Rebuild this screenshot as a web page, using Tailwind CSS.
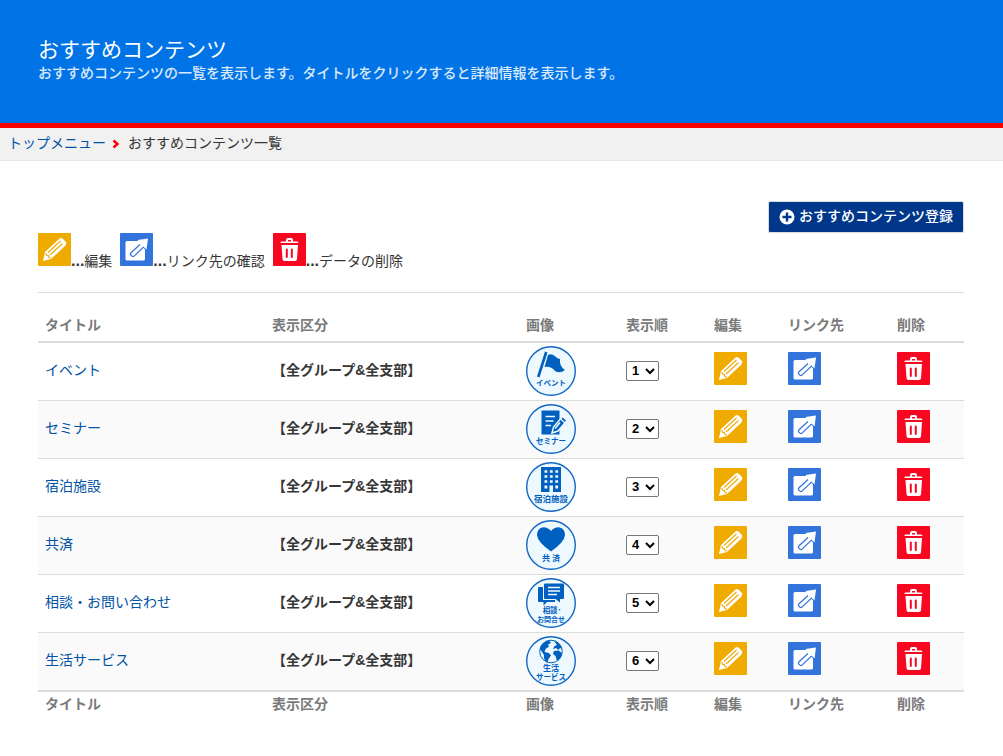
<!DOCTYPE html>
<html lang="ja">
<head>
<meta charset="utf-8">
<meta name="viewport" content="width=device-width, initial-scale=1">
<title>おすすめコンテンツ</title>
<script src="https://cdn.jsdelivr.net/npm/@tailwindcss/browser@4"></script>
</head>
<body class="bg-white font-['Liberation_Sans','Noto_Sans_CJK_JP',sans-serif] text-sm leading-[21px] text-[#363636]">

<svg class="hidden" aria-hidden="true">
  <symbol id="edit" viewBox="0 0 33 33">
    <rect width="33" height="33" rx="1" fill="#f0ab00"/>
    <path d="M5 28 7 19 21 6Q23 4 25 6L28 9Q29 11 27 13L13 26Z" fill="#fff"/>
    <path d="M10 19.500 22.500 8M12 22 24.500 10.500M8 20Q8 23 10.500 22.500Q10 25 13 25" fill="none" stroke="#f0ab00" stroke-width="1.100"/>
    <path d="M6.500 23.500 9.500 26 5.500 27.500Z" fill="#fff"/>
  </symbol>
  <symbol id="link" viewBox="0 0 33 33">
    <rect width="33" height="33" rx="1" fill="#3273dc"/>
    <path d="M7 8H20L25 13V26Q25 27.500 23.500 27.500H7Q5.500 27.500 5.500 26V9.500Q5.500 8 7 8Z" fill="#fff"/>
    <path d="M20 11.500 10.800 20Q9.800 21 10.800 22L12 23.200Q13 24.200 14 23.200L23.500 14L26.500 17" fill="#fff" stroke="#3273dc" stroke-width="1.200"/>
    <path d="M17.500 7 28 5.500 26.500 16.500 23.500 13.500 20 11Z" fill="#fff"/>
  </symbol>
  <symbol id="trash" viewBox="0 0 33 33">
    <rect width="33" height="33" rx="1" fill="#f80820"/>
    <path d="M7.500 10V9.500Q7.500 8.500 8.500 8.500H13V7Q13 5 15 5H18Q20 5 20 7V8.500H24Q25.500 8.500 25.500 10ZM15 8.500H18V7H15ZM8.500 12H25L24 26Q24 28 22 28H11.500Q9.500 28 9.500 26Z" fill="#fff" fill-rule="evenodd"/>
    <path d="M13.800 16.500V24M18.800 16.500V24" stroke="#f80820" stroke-width="2" stroke-linecap="round"/>
  </symbol>
  <symbol id="ring" viewBox="0 0 50 50">
    <circle cx="25" cy="25" r="24.300" fill="#eef9ff" stroke="#1268c3" stroke-width="1.400"/>
  </symbol>
</svg>

<header class="border-b-5 border-[#f00] bg-[#0073e6] px-[38px] pt-[37px] pb-[39px]">
  <h1 class="text-[21px] leading-[26px] text-white">おすすめコンテンツ</h1>
  <p class="font-medium text-white/85">おすすめコンテンツの一覧を表示します。タイトルをクリックすると詳細情報を表示します。</p>
</header>

<nav aria-label="パンくず" class="flex items-center gap-1.5 border-b border-[#e6e6e6] bg-[#f1f1f1] px-2 pt-[5px] pb-1.5">
  <a href="#" class="text-[#0052a5]">トップメニュー</a>
  <svg viewBox="0 0 8 10" class="mr-0.5 h-2.5 w-2" fill="none" stroke="#f00" stroke-width="2.400" aria-hidden="true"><path d="M1.500 1.500 5.500 5 1.500 8.500"/></svg>
  <span>おすすめコンテンツ一覧</span>
</nav>

<main class="pt-10 pr-[39px] pl-[38px]">
  <div class="flex justify-end">
    <button type="button" class="flex h-[32px] items-center gap-1 rounded-xs border border-[#dbdbdb] bg-[#00378b] px-2.5 pb-0.5 font-bold text-white">
      <svg viewBox="0 0 16 16" class="mt-0.5 h-4 w-4" aria-hidden="true"><circle cx="8" cy="8" r="7.500" fill="#fff"/><path d="M8 3.500V12.500M3.500 8H12.500" stroke="#00378b" stroke-width="2.400"/></svg>
      <span class="font-medium">おすすめコンテンツ登録</span>
    </button>
  </div>

  <div class="flex gap-2">
    <div class="flex"><svg class="h-[33px] w-[33px]" aria-hidden="true"><use href="#edit"/></svg><span class="pt-[17px]"><b class="text-base leading-[21px]">...</b>編集</span></div>
    <div class="flex"><svg class="h-[33px] w-[33px]" aria-hidden="true"><use href="#link"/></svg><span class="pt-[17px]"><b class="text-base leading-[21px]">...</b>リンク先の確認</span></div>
    <div class="flex"><svg class="h-[33px] w-[33px]" aria-hidden="true"><use href="#trash"/></svg><span class="pt-[17px]"><b class="text-base leading-[21px]">...</b>データの削除</span></div>
  </div>

  <hr class="mt-5 border-[#dbdbdb]">

  <table class="mt-[22px] w-full table-fixed border-separate border-spacing-0 text-left [&_td]:px-[7px] [&_td]:pt-0 [&_td]:pb-0.5 [&_th]:px-[7px] [&_thead_th]:border-b-2 [&_thead_th]:border-[#dbdbdb] [&_thead_th]:pb-[5px] [&_tfoot_th]:border-t-2 [&_tfoot_th]:border-[#dbdbdb] [&_tfoot_th]:pt-0.5 [&_tbody_tr]:h-[58px] [&_tbody_tr:last-child]:h-[57px] [&_tbody_tr:last-child_td]:border-b-0 [&_tbody_td]:border-b [&_tbody_td]:border-[#dbdbdb] [&_tbody_tr:nth-child(even)]:bg-[#fafafa]">
    <colgroup>
      <col class="w-[227px]"><col class="w-[254px]"><col class="w-[100px]"><col class="w-[88px]"><col class="w-[74px]"><col class="w-[109px]"><col class="w-[74px]">
    </colgroup>
    <thead class="text-[#7a7a7a]">
      <tr><th scope="col">タイトル</th><th scope="col">表示区分</th><th scope="col">画像</th><th scope="col">表示順</th><th scope="col">編集</th><th scope="col">リンク先</th><th scope="col">削除</th></tr>
    </thead>
    <tbody>
      <tr>
        <td><a href="#" class="text-[#0052a5]">イベント</a></td>
        <td class="font-bold">【全グループ&amp;全支部】</td>
        <td><svg viewBox="0 0 50 50" class="h-[50px] w-[50px]" fill="#0060c0" role="img" aria-label="イベント"><use href="#ring"/>
          <path d="M19 5.500 21.500 6.500 13.500 31.500 11 30.500Z"/><path d="M22 9Q26 7 30 11Q32 13 34 13Q33 20 39 24Q34 28 29 25Q25 20 18.500 21Z"/>
          <text x="25" y="39.500" text-anchor="middle" font-size="7.500" font-weight="bold">イベント</text></svg></td>
        <td><select aria-label="イベントの表示順" class="h-5 w-[33px] rounded-xs border border-[#767676] bg-white pl-px text-[13px] font-bold text-black"><option>1</option></select></td>
        <td><button type="button" aria-label="編集" class="block pb-1"><svg class="h-[33px] w-[33px]"><use href="#edit"/></svg></button></td>
        <td><a href="#" aria-label="リンク先" class="block pb-1"><svg class="h-[33px] w-[33px]"><use href="#link"/></svg></a></td>
        <td><button type="button" aria-label="削除" class="block pb-1"><svg class="h-[33px] w-[33px]"><use href="#trash"/></svg></button></td>
      </tr>
      <tr>
        <td><a href="#" class="text-[#0052a5]">セミナー</a></td>
        <td class="font-bold">【全グループ&amp;全支部】</td>
        <td><svg viewBox="0 0 50 50" class="h-[50px] w-[50px]" fill="#0060c0" role="img" aria-label="セミナー"><use href="#ring"/>
          <path d="M15.500 6.500H33.500V30.500H15.500Z"/><path d="M19.500 12.500H29M19.500 17H27.500M19.500 21.500H25" stroke="#eef9ff" stroke-width="1.600"/>
          <path d="M26 29 27.500 23 36.500 12.500 41 16.500 32 27Z" stroke="#eef9ff" stroke-width="1.500"/><path d="M34 14.500 39 19" stroke="#eef9ff" stroke-width="1.200"/><path d="M29 24.500 34 18.500" stroke="#eef9ff" stroke-width="1.500"/>
          <text x="25" y="39.500" text-anchor="middle" font-size="7.500" font-weight="bold">セミナー</text></svg></td>
        <td><select aria-label="セミナーの表示順" class="h-5 w-[33px] rounded-xs border border-[#767676] bg-white pl-px text-[13px] font-bold text-black"><option>2</option></select></td>
        <td><button type="button" aria-label="編集" class="block pb-1"><svg class="h-[33px] w-[33px]"><use href="#edit"/></svg></button></td>
        <td><a href="#" aria-label="リンク先" class="block pb-1"><svg class="h-[33px] w-[33px]"><use href="#link"/></svg></a></td>
        <td><button type="button" aria-label="削除" class="block pb-1"><svg class="h-[33px] w-[33px]"><use href="#trash"/></svg></button></td>
      </tr>
      <tr>
        <td><a href="#" class="text-[#0052a5]">宿泊施設</a></td>
        <td class="font-bold">【全グループ&amp;全支部】</td>
        <td><svg viewBox="0 0 50 50" class="h-[50px] w-[50px]" fill="#0060c0" role="img" aria-label="宿泊施設"><use href="#ring"/>
          <path d="M15 5H35V30H15Z"/><path d="M18.500 9.500H32.500M18.500 14.500H32.500M18.500 19.500H32.500" stroke="#eef9ff" stroke-width="2.600" stroke-dasharray="2.800 2.600"/><path d="M18.500 23.500H21.300V26.500H18.500ZM29.300 23.500H32.100V26.500H29.300ZM23.500 23.500H27V30H23.500Z" fill="#eef9ff"/>
          <text x="25" y="40" text-anchor="middle" font-size="8.500" font-weight="bold">宿泊施設</text></svg></td>
        <td><select aria-label="宿泊施設の表示順" class="h-5 w-[33px] rounded-xs border border-[#767676] bg-white pl-px text-[13px] font-bold text-black"><option>3</option></select></td>
        <td><button type="button" aria-label="編集" class="block pb-1"><svg class="h-[33px] w-[33px]"><use href="#edit"/></svg></button></td>
        <td><a href="#" aria-label="リンク先" class="block pb-1"><svg class="h-[33px] w-[33px]"><use href="#link"/></svg></a></td>
        <td><button type="button" aria-label="削除" class="block pb-1"><svg class="h-[33px] w-[33px]"><use href="#trash"/></svg></button></td>
      </tr>
      <tr>
        <td><a href="#" class="text-[#0052a5]">共済</a></td>
        <td class="font-bold">【全グループ&amp;全支部】</td>
        <td><svg viewBox="0 0 50 50" class="h-[50px] w-[50px]" fill="#0060c0" role="img" aria-label="共済"><use href="#ring"/>
          <path d="M25 11Q21 6.500 16 7.500Q11 9 11 15Q11.500 22 25 31.500Q38.500 22 39 15Q39 9 34 7.500Q29 6.500 25 11Z"/>
          <text x="25" y="41" text-anchor="middle" font-size="8" font-weight="bold">共 済</text></svg></td>
        <td><select aria-label="共済の表示順" class="h-5 w-[33px] rounded-xs border border-[#767676] bg-white pl-px text-[13px] font-bold text-black"><option>4</option></select></td>
        <td><button type="button" aria-label="編集" class="block pb-1"><svg class="h-[33px] w-[33px]"><use href="#edit"/></svg></button></td>
        <td><a href="#" aria-label="リンク先" class="block pb-1"><svg class="h-[33px] w-[33px]"><use href="#link"/></svg></a></td>
        <td><button type="button" aria-label="削除" class="block pb-1"><svg class="h-[33px] w-[33px]"><use href="#trash"/></svg></button></td>
      </tr>
      <tr>
        <td><a href="#" class="text-[#0052a5]">相談・お問い合わせ</a></td>
        <td class="font-bold">【全グループ&amp;全支部】</td>
        <td><svg viewBox="0 0 50 50" class="h-[50px] w-[50px]" fill="#0060c0" role="img" aria-label="相談・お問合せ"><use href="#ring"/>
          <path d="M13 9H17V22H29V24H21L17.500 27.500V24H13Q12 24 12 23V10Q12 9 13 9Z"/><path d="M19 5.500H37Q38 5.500 38 6.500V20Q38 21 37 21H34V24.500L29.500 21H19Q18 21 18 20V6.500Q18 5.500 19 5.500Z"/><path d="M22 9.500H34M22 13H34M22 16.500H31" stroke="#eef9ff" stroke-width="1.500"/>
          <text x="26" y="34.500" text-anchor="middle" font-size="7.500" font-weight="bold">相談･</text><text x="25" y="43.500" text-anchor="middle" font-size="7" font-weight="bold">お問合せ</text></svg></td>
        <td><select aria-label="相談・お問い合わせの表示順" class="h-5 w-[33px] rounded-xs border border-[#767676] bg-white pl-px text-[13px] font-bold text-black"><option>5</option></select></td>
        <td><button type="button" aria-label="編集" class="block pb-1"><svg class="h-[33px] w-[33px]"><use href="#edit"/></svg></button></td>
        <td><a href="#" aria-label="リンク先" class="block pb-1"><svg class="h-[33px] w-[33px]"><use href="#link"/></svg></a></td>
        <td><button type="button" aria-label="削除" class="block pb-1"><svg class="h-[33px] w-[33px]"><use href="#trash"/></svg></button></td>
      </tr>
      <tr>
        <td><a href="#" class="text-[#0052a5]">生活サービス</a></td>
        <td class="font-bold">【全グループ&amp;全支部】</td>
        <td><svg viewBox="0 0 50 50" class="h-[50px] w-[50px]" fill="#0060c0" role="img" aria-label="生活サービス"><use href="#ring"/>
          <circle cx="25" cy="15.500" r="11.300" fill="#eef9ff" stroke="#0060c0" stroke-width="1"/><path d="M14 13Q15 6 23 4.500L25 7 22 8.500 23 10.500 19.500 13 18.500 16 23 17 25 19.500 22.500 23 21.500 26.500Q17 24 18 19ZM28 5Q35 7 36 13L34 12 32.500 14 30 12 27 13 28.500 10 31 9ZM28 15 32.500 14.500 36 17Q35 23 31 25L29.500 20 27 18Z"/>
          <text x="25" y="35" text-anchor="middle" font-size="8" font-weight="bold">生活</text><text x="25" y="43.500" text-anchor="middle" font-size="7.500" font-weight="bold">サービス</text></svg></td>
        <td><select aria-label="生活サービスの表示順" class="h-5 w-[33px] rounded-xs border border-[#767676] bg-white pl-px text-[13px] font-bold text-black"><option>6</option></select></td>
        <td><button type="button" aria-label="編集" class="block pb-1"><svg class="h-[33px] w-[33px]"><use href="#edit"/></svg></button></td>
        <td><a href="#" aria-label="リンク先" class="block pb-1"><svg class="h-[33px] w-[33px]"><use href="#link"/></svg></a></td>
        <td><button type="button" aria-label="削除" class="block pb-1"><svg class="h-[33px] w-[33px]"><use href="#trash"/></svg></button></td>
      </tr>
    </tbody>
    <tfoot class="text-[#7a7a7a]">
      <tr><th scope="col">タイトル</th><th scope="col">表示区分</th><th scope="col">画像</th><th scope="col">表示順</th><th scope="col">編集</th><th scope="col">リンク先</th><th scope="col">削除</th></tr>
    </tfoot>
  </table>
</main>
</body>
</html>
